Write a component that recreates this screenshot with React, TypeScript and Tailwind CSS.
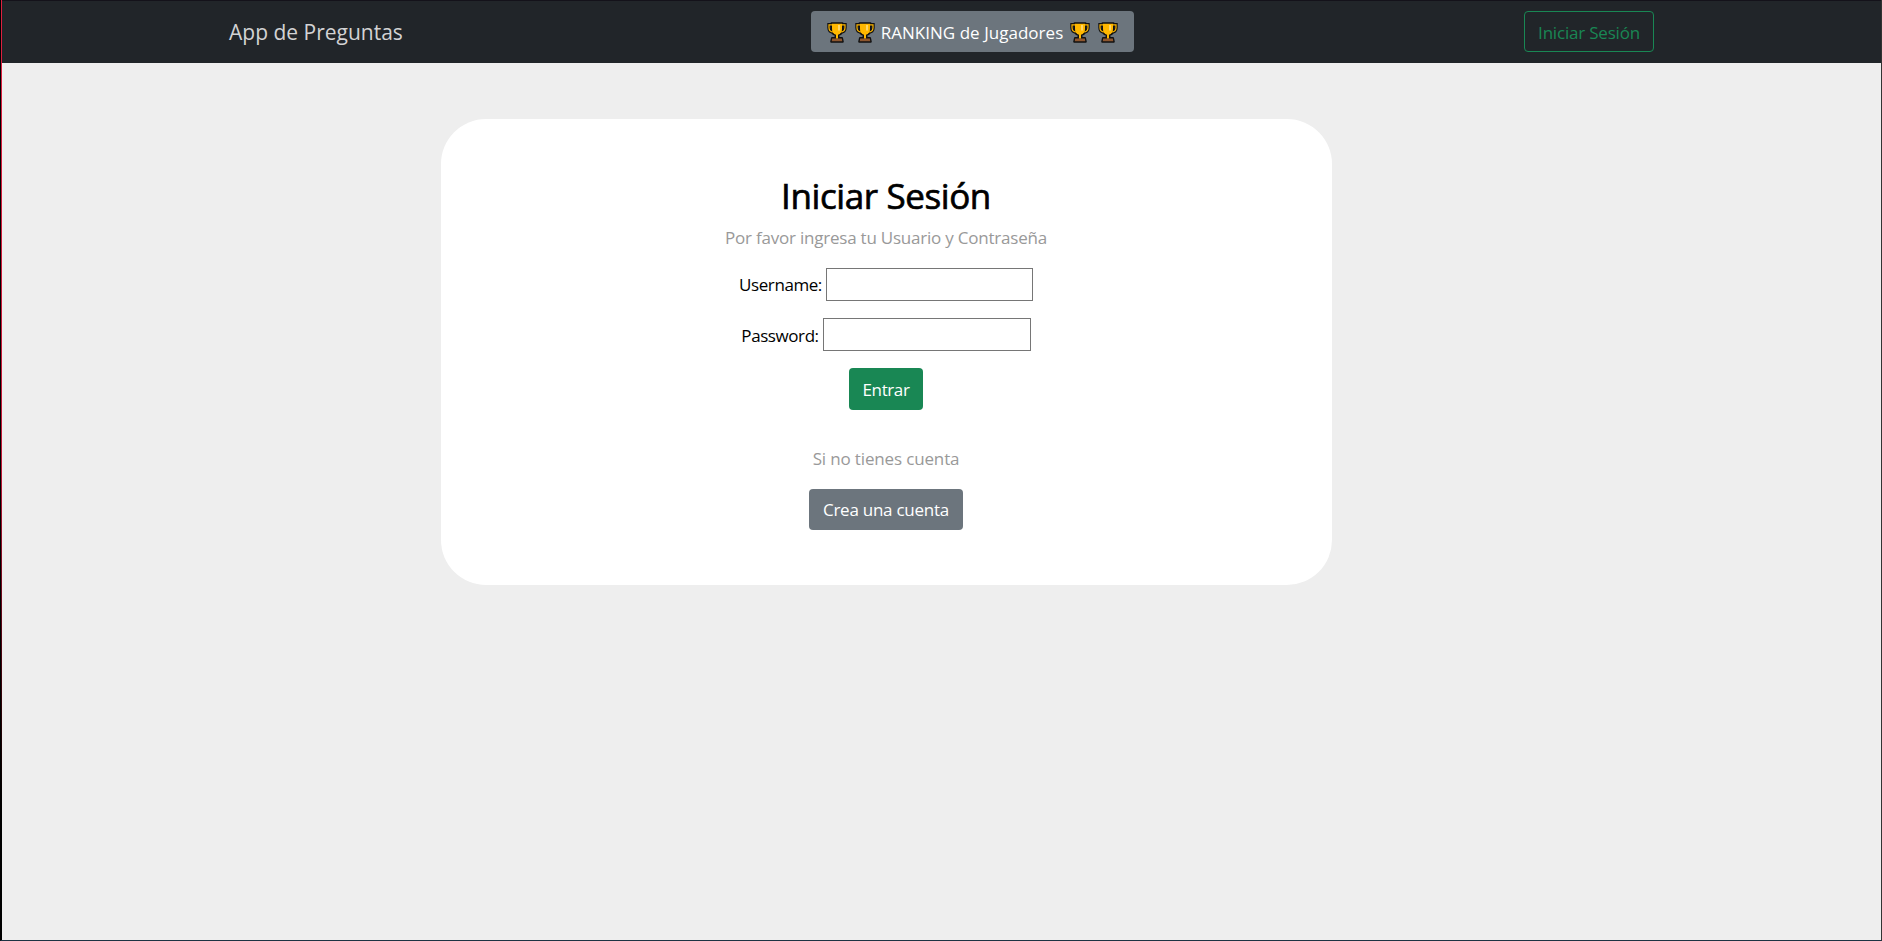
function Trophy() {
  return (
    <svg viewBox="0 0 20 21" className="h-[21px] w-5 shrink-0" fill="none">
      <path d="M5 2.800H2v3c0 2.600 1.700 4.200 4.500 4.200M15 2.800h3v3c0 2.600-1.700 4.200-4.500 4.200" stroke="#111" strokeWidth="3.400" />
      <path d="M4.500 1.300h11v5.200c0 4-1.800 6-4 6.500v3H15l.8 3.700H4.200l.8-3.700H8.500v-3c-2.200-.5-4-2.500-4-6.500z" fill="#ffb800" stroke="#111" strokeWidth="2" strokeLinejoin="round" />
      <path d="M5 2.800H2v3c0 2.600 1.700 4.200 4.500 4.200M15 2.800h3v3c0 2.600-1.700 4.200-4.500 4.200" stroke="#ffb800" strokeWidth="1.200" />
      <path d="M5 1.800h10v4.700c0 3.800-1.600 5.700-4 6.200V16H9v-3.300C6.600 12.200 5 10.300 5 6.500z" fill="#ffb800" />
      <path d="M12 3v5.500" stroke="#ffe08a" strokeWidth="1.500" />
      <path d="M5.200 16.600h9.600l.5 2.600H4.700z" fill="#8e562e" />
    </svg>
  );
}

type FieldProps = { label: string; name: string; type: string; width: string; leading: string };

function Field({ label, name, type, width, leading }: FieldProps) {
  return (
    <div className="flex h-[33px] justify-center">
      <label htmlFor={name} className={`mr-[4px] whitespace-nowrap tracking-[-0.42px] ${leading}`}>
        {label}
      </label>
      <input id={name} name={name} type={type} className={`h-[33px] border border-[#767676] bg-white px-1 outline-none ${width}`} />
    </div>
  );
}

export default function App() {
  return (
    <div className="flex h-[941px] border-b border-l border-r border-b-[#1d3343] border-l-black border-r-[#333] bg-[#eee] font-['Open_Sans','Noto_Sans',sans-serif] text-[17px] text-black">
      <div className="w-px shrink-0 bg-linear-to-b from-[#e0203f] via-[#c01a38] to-black to-90%" />
      <div className="flex min-w-0 grow flex-col">
        <nav className="flex h-[63px] shrink-0 items-start border-t border-[#14121a] bg-[#212529] px-[227px]">
          <a className="mt-[11px] w-[582px] text-[21px] leading-[41px] text-[#d3d3d4]">App de Preguntas</a>
          <a className="mt-[10px] flex h-[41px] w-[323px] items-center justify-center gap-[8px] whitespace-nowrap rounded bg-[#6c757d] pt-[2px] text-white">
            <Trophy />
            <Trophy />
            <span className="-mx-[1px] -ml-[2px] tracking-[0.03px]">RANKING de Jugadores</span>
            <Trophy />
            <Trophy />
          </a>
          <a className="ml-auto mt-[10px] flex h-[41px] w-[130px] items-center justify-center whitespace-nowrap rounded border border-[#198754] pt-[2px] tracking-[-0.2px] text-[#198754]">
            Iniciar Sesión
          </a>
        </nav>
        <main className="ml-[439px] mt-14 flex h-[466px] w-[891px] flex-col items-center rounded-[45px] bg-white pr-px pt-[56px]">
          <h2 className="text-[35px] font-normal leading-[42px] tracking-[-0.4px] [-webkit-text-stroke:0.7px_black]">Iniciar Sesión</h2>
          <p className="mt-[8px] leading-[26px] tracking-[-0.22px] text-[#999]">Por favor ingresa tu Usuario y Contraseña</p>
          <form className="mt-[17px] flex flex-col items-center">
            <Field label="Username:" name="username" type="text" width="w-[207px]" leading="leading-[34px]" />
            <div className="h-[17px]" />
            <Field label="Password:" name="password" type="password" width="w-[208px]" leading="leading-[36px]" />
            <button type="button" className="mt-[17px] h-[42px] w-[74px] rounded bg-[#198754] pt-px tracking-[-0.4px] text-white">
              Entrar
            </button>
          </form>
          <p className="mt-[36px] leading-[26px] tracking-[-0.15px] text-[#999]">Si no tienes cuenta</p>
          <a className="mt-[17px] flex h-[41px] w-[154px] items-center justify-center whitespace-nowrap rounded bg-[#6c757d] tracking-[-0.25px] text-white">
            Crea una cuenta
          </a>
        </main>
      </div>
    </div>
  );
}
